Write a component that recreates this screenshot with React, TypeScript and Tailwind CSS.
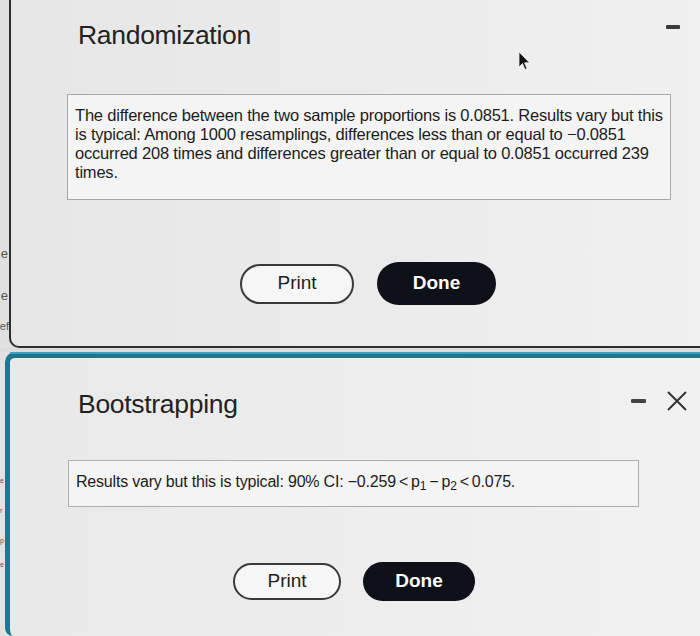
export default function App() {
  return (
    <div className="w-[700px] h-[636px] overflow-hidden flex flex-col bg-[#e2e2e2] font-['Liberation_Sans',Arial,sans-serif] text-[#1c1c1c]">
      {/* Randomization window */}
      <div className="flex h-[348px] shrink-0">
        <div className="w-[9px] shrink-0 overflow-hidden flex flex-col items-end pt-[246px] text-[13px] leading-[16px] text-[#555] bg-[#e0e0e0]">
          <span className="mr-[1px]">e</span>
          <span className="mt-[26px] mr-[1px]">e</span>
          <span className="mt-[14px] mr-[0px] text-[11px]">ef</span>
        </div>
        <section className="relative flex-1 flex flex-col border-l-2 border-b-2 border-[#2e2e2e] rounded-bl-[10px] bg-linear-to-r from-[#e6e6e6] to-[#f0f0f0]">
          <div className="flex items-start justify-between pl-[67px] pr-[20px] pt-[19px]">
            <h1 className="text-[26.5px] leading-[32px] tracking-[-0.3px] text-[#222]">Randomization</h1>
            <span className="mt-[6px] block w-[14px] h-[4px] rounded-[1px] bg-[#3a3a3a]" />
          </div>
          <svg className="absolute left-[506px] top-[51px]" width="14" height="20" viewBox="0 0 14 20">
            <path d="M2 1 L2 16 L5.5 12.5 L8 18.5 L10 17.6 L7.6 11.8 L12.5 11.8 Z" fill="#111" stroke="#eee" strokeWidth="0.8" />
          </svg>
          <div className="ml-[56px] mr-[29px] mt-[43px] h-[106px] border border-[#a8a8a8] bg-[#f4f4f4] pl-[7px] pt-[11px] text-[16.5px] leading-[19px] tracking-[-0.2px] whitespace-nowrap">
            The difference between the two sample proportions is 0.0851. Results vary but this
            <br />
            is typical: Among 1000 resamplings, differences less than or equal to {'\u2212'}0.0851
            <br />
            occurred 208 times and differences greater than or equal to 0.0851 occurred 239
            <br />
            times.
          </div>
          <div className="flex items-center gap-[23px] pl-[229px] mt-[62px]">
            <button className="w-[114px] h-[40px] rounded-full border-2 border-[#3a3a3a] bg-[#f6f6f6] text-[19px] text-[#222]">
              Print
            </button>
            <button className="w-[119px] h-[43px] rounded-full bg-[#0e1117] text-[19px] font-bold text-white">
              Done
            </button>
          </div>
        </section>
      </div>

      <div className="h-[4px] shrink-0 bg-[#dcdcdc]" />

      {/* Bootstrapping window */}
      <div className="flex flex-1">
        <div className="w-[5px] shrink-0 overflow-hidden flex flex-col items-start pt-[124px] text-[7px] leading-[10px] text-[#555]">
          <span>e</span>
          <span className="mt-[20px]">r</span>
          <span className="mt-[20px]">p</span>
          <span className="mt-[14px]">e</span>
        </div>
        <section className="relative flex-1 flex flex-col border-t-[6px] border-l-[5px] border-[#1c7891] rounded-tl-[10px] rounded-bl-[8px] bg-linear-to-r from-[#e9e9e9] to-[#f1f1f1]">
          <div className="absolute left-0 right-0 top-[-6px] h-[2px] bg-[#3aa0bb]" />
          <div className="flex items-start justify-between pl-[68px] pr-[12px] pt-[30px]">
            <h2 className="text-[26.5px] leading-[32px] tracking-[-0.3px] text-[#222]">Bootstrapping</h2>
            <div className="flex items-center gap-[20px] mt-[2px]">
              <span className="block w-[15px] h-[4px] rounded-[1px] bg-[#444]" />
              <svg width="22" height="22" viewBox="0 0 22 22">
                <path d="M2 2 L20 20 M20 2 L2 20" stroke="#333" strokeWidth="2" />
              </svg>
            </div>
          </div>
          <div className="ml-[58px] mr-[61px] mt-[40px] h-[47px] border border-[#adadad] bg-[#f4f4f4] pl-[7px] pt-[11px] text-[16px] leading-[19px] tracking-[-0.2px] whitespace-nowrap">
            Results vary but this is typical: 90% CI: {'\u2212'}0.259{'\u2009'}&lt;{'\u2009'}p<sub className="text-[12px]">1</sub>
            {'\u2009\u2212\u2009'}p<sub className="text-[12px]">2</sub>{'\u2009'}&lt;{'\u2009'}0.075.
          </div>
          <div className="flex items-center gap-[22px] pl-[223px] mt-[55px]">
            <button className="w-[108px] h-[37px] rounded-full border-2 border-[#3a3a3a] bg-[#f6f6f6] text-[19px] text-[#222]">
              Print
            </button>
            <button className="w-[112px] h-[39px] rounded-full bg-[#0e1117] text-[19px] font-bold text-white">
              Done
            </button>
          </div>
        </section>
      </div>
    </div>
  );
}
